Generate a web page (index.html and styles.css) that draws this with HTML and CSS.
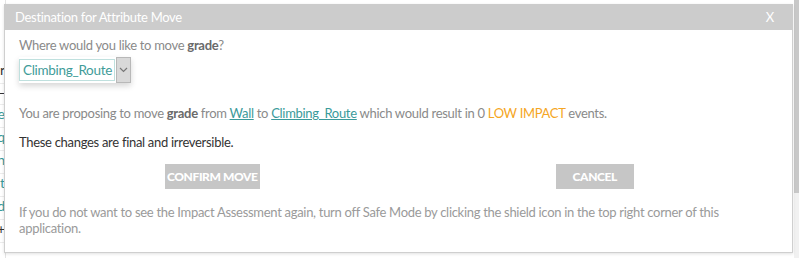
FILE: index.html
```html
<!DOCTYPE html>
<html>
<head>
<meta charset="utf-8">
<link rel="stylesheet" href="styles.css">
</head>
<body>
<div class="page">
  <div class="side">
    <div class="side-row dark r1">Year</div>
    <div class="side-row dark r2">—</div>
    <div class="side-row r3">Value</div>
    <div class="side-row r4">Freq</div>
    <div class="side-row r5">Den</div>
    <div class="side-row r6">Cat</div>
    <div class="side-row r7">Grid</div>
    <div class="side-row dark r8">+</div>
  </div>
  <div class="scroll"><div class="thumb"></div></div>
</div>

<div class="dialog">
  <div class="dialog-head">
    <span class="title">Destination for Attribute Move</span>
    <span class="close">X</span>
  </div>
  <div class="dialog-body">
    <p class="q">Where would you like to move <b>grade</b>?</p>
    <div class="select">
      <span class="select-value">Climbing_Route</span>
      <span class="select-btn">
        <svg width="9" height="6" viewBox="0 0 9 6"><path d="M1 1 L4.5 4.5 L8 1" fill="none" stroke="#777" stroke-width="1.2"/></svg>
      </span>
    </div>
    <p class="info">You are proposing to move <b>grade</b> from <a class="lnk">Wall</a> to <a class="lnk">Climbing_Route</a> which would result in 0 <span class="low">LOW IMPACT</span> events.</p>
    <p class="final">These changes are final and irreversible.</p>
    <div class="buttons">
      <div class="btn-cell"><span class="btn btn-confirm">CONFIRM MOVE</span></div>
      <div class="btn-cell"><span class="btn btn-cancel">CANCEL</span></div>
    </div>
    <p class="note">If you do not want to see the Impact Assessment again, turn off Safe Mode by clicking the shield icon in the top right corner of this application.</p>
  </div>
</div>
</body>
</html>
```

FILE: styles.css
```css
html, body {
  margin: 0;
  padding: 0;
  width: 799px;
  height: 258px;
  overflow: hidden;
  background: #ffffff;
  font-family: Lato, "Open Sans", sans-serif;
}

.page {
  position: relative;
  width: 799px;
  height: 258px;
}

.side {
  width: 5px;
  overflow: hidden;
  padding-top: 61px;
  border-right: 1px solid #e4e4e4;
  height: 197px;
}

.side-row {
  direction: rtl;
  white-space: nowrap;
  font-size: 14px;
  color: #3a9a9a;
  height: 22px;
  line-height: 18px;
  border-bottom: 1px solid #ececec;
}

.side-row.dark { color: #333; }
.r2 { height: 20px; }

.scroll {
  position: absolute;
  right: 0;
  top: 0;
  width: 5px;
  height: 258px;
  background: #f1f1f1;
}

.thumb {
  height: 193px;
  background: #c8c8c8;
}

.dialog {
  position: absolute;
  left: 4px;
  top: 4px;
  width: 787px;
  height: 248px;
  background: #ffffff;
  border: 1px solid #cfcfcf;
  border-top: none;
  box-shadow: 0 1px 3px rgba(0,0,0,0.12);
  letter-spacing: -0.3px;
}

.dialog-head {
  height: 26px;
  margin: 0 -1px;
  background: #cccccc;
  display: flex;
  align-items: center;
  justify-content: space-between;
  padding: 0 19px 0 11px;
  color: #ffffff;
  font-size: 13px;
}

.close {
  font-size: 13px;
}

.dialog-body {
  padding: 0 14px;
}

.q {
  margin: 6px 0 0;
  font-size: 13px;
  line-height: 18px;
  color: #8a8a8a;
}

.q b, .info b {
  color: #6a6a6a;
  font-weight: bold;
}

.select {
  display: flex;
  align-items: center;
  margin-top: 3px;
  width: 112px;
  height: 26px;
  box-shadow: 0 3px 6px rgba(0,0,0,0.16);
}

.select-value {
  box-sizing: border-box;
  width: 97px;
  height: 22px;
  border: 1px solid #bfe0de;
  padding-left: 3px;
  color: #3f9c99;
  font-size: 13.5px;
  line-height: 20px;
  white-space: nowrap;
  overflow: hidden;
}

.select-btn {
  box-sizing: border-box;
  width: 15px;
  height: 26px;
  margin-left: 1px;
  background: #d9d9d9;
  border: 1px solid #b8b8b8;
  display: flex;
  align-items: center;
  justify-content: center;
}

.info {
  margin: 21px 0 0;
  font-size: 13px;
  line-height: 18px;
  color: #8a8a8a;
}

.lnk {
  color: #3a9a9a;
  text-decoration: underline;
}

.low {
  color: #f5a623;
}

.final {
  margin: 11px 0 0;
  font-size: 13px;
  line-height: 18px;
  color: #333333;
}

.buttons {
  display: flex;
  margin: 13px -8px 0 2px;
}

.btn-cell {
  flex: 1;
  display: flex;
  justify-content: center;
}

.btn {
  display: inline-block;
  background: #c6c6c6;
  color: #ffffff;
  font-weight: 900;
  font-size: 12px;
  letter-spacing: -0.4px;
  height: 25px;
  line-height: 25px;
  text-align: center;
}

.btn-confirm { width: 95px; }
.btn-cancel { width: 78px; }

.note {
  margin: 15px 0 0;
  font-size: 13px;
  line-height: 16px;
  color: #9a9a9a;
}
```
